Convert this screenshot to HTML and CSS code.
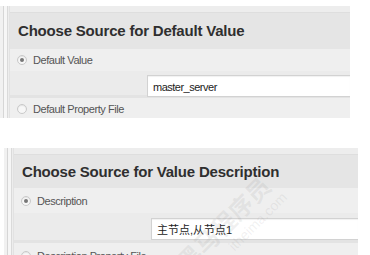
FILE: index.html
```html
<!DOCTYPE html>
<html lang="en">
  <head>
    <meta charset="UTF-8" />
    <title>Choose Source</title>
    <link rel="stylesheet" href="styles.css">
  </head>
  <body>
    <!-- Default value -->
    <div class="frame frame-one">
      <div class="rail"></div>
      <div class="panel">
        <div class="panel-top"></div>
        <h2 class="panel-title">Choose Source for Default Value</h2>
        <div class="option checked">
          <span class="radio"></span>
          <span>Default Value</span>
        </div>
        <div class="field-row">
          <div class="field">master_server</div>
        </div>
        <div class="option">
          <span class="radio"></span>
          <span>Default Property File</span>
        </div>
      </div>
    </div>

    <!-- Value description -->
    <div class="frame frame-two">
      <div class="rail"></div>
      <div class="panel">
        <div class="panel-top"></div>
        <h2 class="panel-title">Choose Source for Value Description</h2>
        <div class="option checked">
          <span class="radio"></span>
          <span>Description</span>
        </div>
        <div class="field-row">
          <div class="field">主节点,从节点1</div>
        </div>
        <div class="option">
          <span class="radio"></span>
          <span>Description Property File</span>
        </div>
      </div>
      <div class="watermark">
        <span class="wm-main">黑马程序员</span>
        <span class="wm-sub">itheima.com</span>
      </div>
    </div>
  </body>
</html>
```

FILE: styles.css
```css
body {
  margin: 0;
  background: #fff;
  font-family: Arial, "Liberation Sans", "Noto Sans CJK SC", sans-serif;
  color: #333;
}
.frame {
  display: flex;
  position: relative;
  overflow: hidden;
}
.frame-one {
  margin-top: 6px;
  width: 350px;
  height: 112px;
}
.frame-two {
  margin-top: 30px;
  margin-left: 4px;
  width: 354px;
  height: 107px;
}
.rail {
  width: 9px;
  flex: none;
  background: linear-gradient(to right, #f1f1f1 0, #f1f1f1 3px, #d6d6d6 3px, #d6d6d6 4px, #f6f6f6 4px, #f6f6f6 7px, #dadada 7px, #dadada 8px, #ededed 8px);
  border-right: 1px solid #e2e2e2;
}
.panel {
  flex: 1;
  background: #ebebeb;
}
.panel-top {
  height: 6px;
  background: #ededed;
  border-bottom: 1px solid #dedede;
}
.panel-title {
  margin: 0;
  height: 36px;
  line-height: 36px;
  padding-left: 8px;
  font-size: 15px;
  letter-spacing: -0.2px;
  font-weight: bold;
  color: #2f2f2f;
  background: #e5e5e5;
}
.frame-two .panel-title {
  height: 33px;
  line-height: 34px;
}
.option {
  display: flex;
  align-items: center;
  gap: 6px;
  height: 22px;
  padding-left: 7px;
  font-size: 11px;
  letter-spacing: -0.45px;
  color: #555;
  background: #efefef;
}
.frame-two .option {
  height: 25px;
}
.radio {
  width: 8px;
  height: 8px;
  border-radius: 50%;
  border: 1px solid #c9c9c9;
  background: #f7f7f7;
  box-shadow: inset 0 1px 1px rgba(0, 0, 0, 0.08);
  position: relative;
}
.checked .radio::after {
  content: "";
  position: absolute;
  left: 2px;
  top: 2px;
  width: 4px;
  height: 4px;
  border-radius: 50%;
  background: #777;
}
.field-row {
  height: 27px;
  padding: 4px 0 0 137px;
  box-sizing: border-box;
  background: #ebebeb;
  border-bottom: 3px solid #e3e3e3;
}
.frame-two .field-row {
  height: 30px;
  padding-top: 5px;
}
.field {
  height: 22px;
  line-height: 22px;
  padding-left: 5px;
  font-size: 11px;
  letter-spacing: -0.5px;
  color: #222;
  background: #fff;
  border: 1px solid #d2d2d2;
  border-right: 0;
  box-sizing: border-box;
  box-shadow: inset 0 1px 1px rgba(0, 0, 0, 0.06);
}
.frame-two .field {
  letter-spacing: 0;
}
/* faint watermark over the second panel */
.watermark {
  position: absolute;
  left: 169px;
  top: 110px;
  transform-origin: 0 0;
  transform: rotate(-45deg);
  display: flex;
  flex-direction: column;
  pointer-events: none;
  color: rgba(140, 140, 140, 0.13);
  white-space: nowrap;
}
.wm-main {
  font-size: 24px;
  font-weight: bold;
  line-height: 26px;
}
.wm-sub {
  font-size: 14px;
  line-height: 16px;
  margin-left: 48px;
}
```
